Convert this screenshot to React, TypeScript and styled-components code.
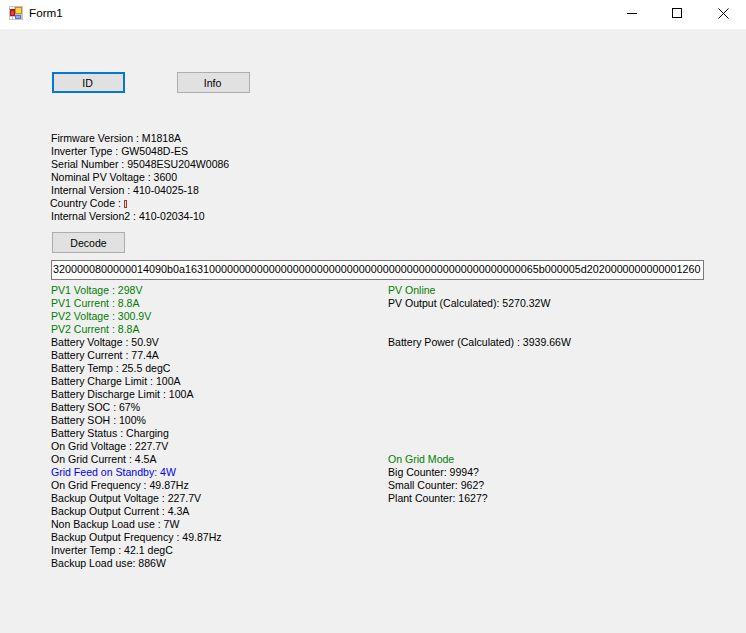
import React from 'react';
import styled, { createGlobalStyle } from 'styled-components';

const GlobalStyle = createGlobalStyle`
  html, body {
    margin: 0;
    padding: 0;
    background: #f0f0f0;
  }
  body {
    font-family: "Liberation Sans", Arial, sans-serif;
    font-size: 10.55px;
    color: #000;
  }
`;

const Window = styled.div`
  width: 746px;
  height: 633px;
  display: flex;
  flex-direction: column;
  overflow: hidden;
`;

const TitleBar = styled.div`
  height: 29px;
  flex: none;
  background: #fff;
  display: flex;
  align-items: flex-start;
`;

const AppIcon = styled.svg`
  width: 14px;
  height: 14px;
  margin: 6px 6px 0 9px;
`;

const Title = styled.span`
  font-size: 11.7px;
  line-height: 14px;
  margin-top: 6px;
  flex: 1;
`;

const WindowButton = styled.div`
  width: 46px;
  height: 29px;
  box-sizing: border-box;
  padding: 8px 0 0 18px;
`;

const Body = styled.div`
  flex: 1;
  padding: 43px 0 0 51px;
  display: flex;
  flex-direction: column;
`;

const ButtonRow = styled.div`
  display: flex;
  gap: 52px;
  padding-left: 1px;
`;

const FormButton = styled.button<{ $focused?: boolean }>`
  width: 73px;
  height: 21px;
  box-sizing: border-box;
  padding: 0 2px 0 0;
  background: #e1e1e1;
  border: ${(p) => (p.$focused ? '2px solid #0078d7' : '1px solid #adadad')};
  font-family: inherit;
  font-size: 10.55px;
  color: #000;
`;

const InfoBlock = styled.div`
  margin-top: 38px;
  display: flex;
  flex-direction: column;
`;

const Line = styled.div<{ $color?: string; $shift?: number }>`
  height: 13px;
  line-height: 15px;
  white-space: nowrap;
  color: ${(p) => p.$color || '#000'};
  margin-left: ${(p) => p.$shift || 0}px;
`;

const Glyph = styled.span`
  display: inline-block;
  width: 1px;
  height: 6px;
  border: 1px solid #9a3a2a;
  background: #f3d9d0;
  vertical-align: -1px;
  margin-left: 3px;
`;

const DecodeButton = styled(FormButton)`
  margin: 10px 0 0 1px;
  padding: 0;
`;

const HexField = styled.div`
  margin-top: 7px;
  width: 653px;
  height: 20px;
  box-sizing: border-box;
  background: #fff;
  border: 1px solid #7a7a7a;
  padding-left: 1px;
  line-height: 17px;
  font-size: 10.79px;
  white-space: nowrap;
  overflow: hidden;
`;

const Readings = styled.div`
  margin-top: 3px;
  display: grid;
  grid-template-columns: 337px 1fr;
`;

const Column = styled.div`
  display: flex;
  flex-direction: column;
`;

const Spacer = styled.div<{ $rows: number }>`
  height: ${(p) => p.$rows * 13}px;
`;

const GREEN = '#008000';
const BLUE = '#0000ff';

const leftRows: { text: string; color?: string }[] = [
  { text: 'PV1 Voltage : 298V', color: GREEN },
  { text: 'PV1 Current : 8.8A', color: GREEN },
  { text: 'PV2 Voltage : 300.9V', color: GREEN },
  { text: 'PV2 Current : 8.8A', color: GREEN },
  { text: 'Battery Voltage : 50.9V' },
  { text: 'Battery Current : 77.4A' },
  { text: 'Battery Temp : 25.5 degC' },
  { text: 'Battery Charge Limit : 100A' },
  { text: 'Battery Discharge Limit : 100A' },
  { text: 'Battery SOC : 67%' },
  { text: 'Battery SOH : 100%' },
  { text: 'Battery Status : Charging' },
  { text: 'On Grid Voltage : 227.7V' },
  { text: 'On Grid Current : 4.5A' },
  { text: 'Grid Feed on Standby: 4W', color: BLUE },
  { text: 'On Grid Frequency : 49.87Hz' },
  { text: 'Backup Output Voltage : 227.7V' },
  { text: 'Backup Output Current : 4.3A' },
  { text: 'Non Backup Load use : 7W' },
  { text: 'Backup Output Frequency : 49.87Hz' },
  { text: 'Inverter Temp : 42.1 degC' },
  { text: 'Backup Load use: 886W' },
];

const hex =
  '3200000800000014090b0a1631' + '0'.repeat(53) + '65b000005d2020' + '0'.repeat(11) + '1260';

const App: React.FC = () => {
  return (
    <Window>
      <GlobalStyle />
      <TitleBar>
        <AppIcon viewBox="0 0 14 14" shapeRendering="crispEdges">
          <rect x="0" y="0" width="14" height="14" fill="#c4c4c4" />
          <rect x="1" y="1" width="4" height="2" fill="#fff" />
          <rect x="1" y="11" width="2" height="2" fill="#fff" />
          <rect x="4" y="11" width="2" height="2" fill="#fff" />
          <rect x="1" y="3" width="5" height="7" fill="#a81c1c" />
          <rect x="2" y="5" width="3" height="4" fill="#e8383c" />
          <rect x="6" y="1" width="7" height="7" fill="#c89018" />
          <rect x="7" y="2" width="5" height="5" fill="#fcd050" />
          <rect x="6" y="9" width="6" height="4" fill="#4a7ac8" />
          <rect x="7" y="10" width="4" height="2" fill="#8ab0e8" />
        </AppIcon>
        <Title>Form1</Title>
        <WindowButton>
          <svg width="11" height="11" viewBox="0 0 11 11" shapeRendering="crispEdges" display="block">
            <path d="M1 5.5H11" stroke="#000" strokeWidth="1" />
          </svg>
        </WindowButton>
        <WindowButton>
          <svg width="11" height="11" viewBox="0 0 11 11" shapeRendering="crispEdges" display="block">
            <rect x="0.5" y="0.5" width="9" height="9" fill="none" stroke="#000" />
          </svg>
        </WindowButton>
        <WindowButton>
          <svg width="11" height="11" viewBox="0 0 11 11" display="block">
            <path d="M0.5 0.5L10.5 10.5M10.5 0.5L0.5 10.5" stroke="#000" strokeWidth="1" />
          </svg>
        </WindowButton>
      </TitleBar>
      <Body>
        <ButtonRow>
          <FormButton $focused>ID</FormButton>
          <FormButton>Info</FormButton>
        </ButtonRow>
        <InfoBlock>
          <Line>Firmware Version : M1818A</Line>
          <Line>Inverter Type : GW5048D-ES</Line>
          <Line>Serial Number : 95048ESU204W0086</Line>
          <Line>Nominal PV Voltage : 3600</Line>
          <Line>Internal Version : 410-04025-18</Line>
          <Line $shift={-1}>
            Country Code :<Glyph />
          </Line>
          <Line>Internal Version2 : 410-02034-10</Line>
        </InfoBlock>
        <DecodeButton>Decode</DecodeButton>
        <HexField>{hex}</HexField>
        <Readings>
          <Column>
            {leftRows.map((row) => (
              <Line key={row.text} $color={row.color}>
                {row.text}
              </Line>
            ))}
          </Column>
          <Column>
            <Line $color={GREEN}>PV Online</Line>
            <Line>PV Output (Calculated): 5270.32W</Line>
            <Spacer $rows={2} />
            <Line>Battery Power (Calculated) : 3939.66W</Line>
            <Spacer $rows={8} />
            <Line $color={GREEN}>On Grid Mode</Line>
            <Line>Big Counter: 9994?</Line>
            <Line>Small Counter: 962?</Line>
            <Line>Plant Counter: 1627?</Line>
          </Column>
        </Readings>
      </Body>
    </Window>
  );
};

export default App;
